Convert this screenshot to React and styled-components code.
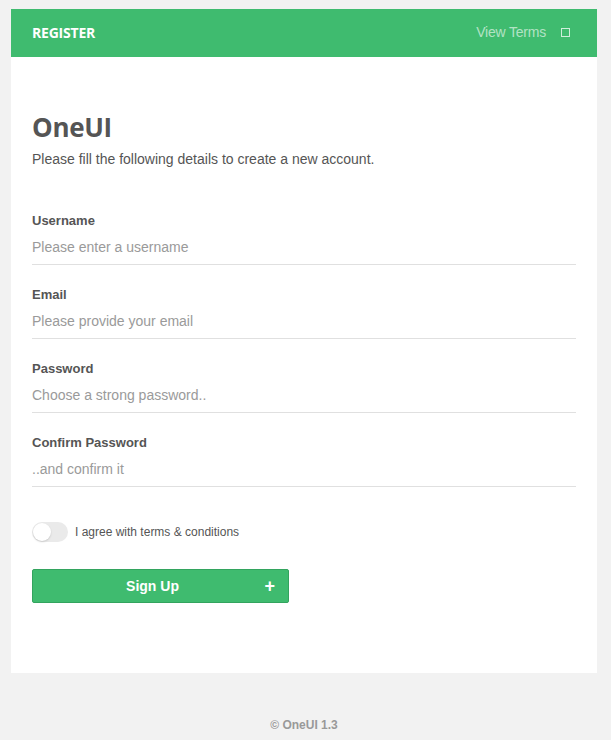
import React, { useState } from "react";
import styled, { createGlobalStyle } from "styled-components";

const GlobalStyle = createGlobalStyle`
  html, body {
    margin: 0;
    padding: 0;
    background-color: #f2f2f2;
    font-family: "Liberation Sans", Arial, sans-serif;
    color: #555;
  }
  * { box-sizing: border-box; }
`;

const Page = styled.div`
  padding: 9px 14px 0 11px;
  min-height: 740px;
`;

const Card = styled.div`
  background-color: #fff;
  width: 586px;
  height: 664px;
`;

const Header = styled.div`
  height: 48px;
  background-color: #3fbb6f;
  display: flex;
  align-items: center;
  justify-content: space-between;
  padding: 0 27px 2px 21px;
`;

const HeaderTitle = styled.h3`
  margin: 0;
  font-family: "Open Sans", sans-serif;
  font-size: 14px;
  font-weight: 700;
  color: #fff;
  letter-spacing: -0.2px;
`;

const HeaderActions = styled.div`
  display: flex;
  align-items: center;
  gap: 15px;
`;

const TermsLink = styled.a`
  font-size: 14px;
  color: rgba(255, 255, 255, 0.6);
  text-decoration: none;
  letter-spacing: -0.2px;
`;

const SquareIcon = styled.span`
  display: block;
  width: 9px;
  height: 9px;
  border: 1px solid rgba(255, 255, 255, 0.75);
`;

const Body = styled.div`
  padding: 54px 21px 0 21px;
`;

const Title = styled.h1`
  margin: 0;
  font-family: "Open Sans", sans-serif;
  font-size: 26px;
  font-weight: 700;
  line-height: 32px;
  color: #555;
  letter-spacing: -0.3px;
`;

const Subtitle = styled.p`
  margin: 8px 0 0;
  font-size: 14px;
  color: #555;
`;

const Form = styled.form`
  margin-top: 46px;
  display: flex;
  flex-direction: column;
  gap: 22px;
`;

const Field = styled.div`
  display: flex;
  flex-direction: column;
`;

const Label = styled.label`
  font-size: 13px;
  font-weight: 700;
  color: #555;
  line-height: 16px;
`;

const Input = styled.input`
  border: none;
  border-bottom: 1px solid #e0e0e0;
  padding: 0;
  height: 36px;
  font-family: "Liberation Sans", Arial, sans-serif;
  font-size: 14px;
  color: #555;
  outline: none;
  &::placeholder {
    color: #9a9a9a;
  }
`;

const ToggleRow = styled.label`
  margin-top: 35px;
  display: flex;
  align-items: center;
  gap: 7px;
  font-size: 12px;
  color: #555;
`;

const Track = styled.span`
  width: 36px;
  height: 20px;
  border-radius: 10px;
  background-color: ${(p) => (p.$on ? "#3fbb6f" : "#eaeaea")};
  position: relative;
  cursor: pointer;
`;

const Knob = styled.span`
  position: absolute;
  top: 1px;
  left: ${(p) => (p.$on ? "17px" : "1px")};
  width: 18px;
  height: 18px;
  border-radius: 50%;
  background-color: #fff;
  box-shadow: 0 1px 2px rgba(0, 0, 0, 0.15);
`;

const SubmitButton = styled.button`
  margin-top: 27px;
  width: 257px;
  height: 34px;
  padding: 0 16px 0 0;
  background-color: #3fbb6f;
  border: 1px solid #33a45e;
  border-radius: 2px;
  color: #fff;
  font-family: "Liberation Sans", Arial, sans-serif;
  font-size: 14px;
  font-weight: 700;
  position: relative;
  cursor: pointer;
`;

const Plus = styled.span`
  position: absolute;
  right: 13px;
  top: 50%;
  transform: translateY(-50%);
  font-size: 18px;
  font-weight: 700;
  line-height: 1;
`;

const Footer = styled.div`
  text-align: center;
  padding-top: 45px;
  font-size: 12px;
  font-weight: 700;
  color: #999;
`;

const fields = [
  { label: "Username", placeholder: "Please enter a username", type: "text" },
  { label: "Email", placeholder: "Please provide your email", type: "email" },
  { label: "Password", placeholder: "Choose a strong password..", type: "password" },
  { label: "Confirm Password", placeholder: "..and confirm it", type: "password" },
];

const App = () => {
  const [agree, setAgree] = useState(false);

  return (
    <>
      <GlobalStyle />
      <Page>
        <Card>
          <Header>
            <HeaderTitle>REGISTER</HeaderTitle>
            <HeaderActions>
              <TermsLink href="#">View Terms</TermsLink>
              <SquareIcon />
            </HeaderActions>
          </Header>
          <Body>
            <Title>OneUI</Title>
            <Subtitle>Please fill the following details to create a new account.</Subtitle>
            <Form onSubmit={(e) => e.preventDefault()}>
              {fields.map((f) => (
                <Field key={f.label}>
                  <Label>{f.label}</Label>
                  <Input type={f.type} placeholder={f.placeholder} />
                </Field>
              ))}
            </Form>
            <ToggleRow onClick={() => setAgree(!agree)}>
              <Track $on={agree}>
                <Knob $on={agree} />
              </Track>
              I agree with terms &amp; conditions
            </ToggleRow>
            <SubmitButton type="button">
              Sign Up
              <Plus>+</Plus>
            </SubmitButton>
          </Body>
        </Card>
        <Footer>© OneUI 1.3</Footer>
      </Page>
    </>
  );
};

export default App;
